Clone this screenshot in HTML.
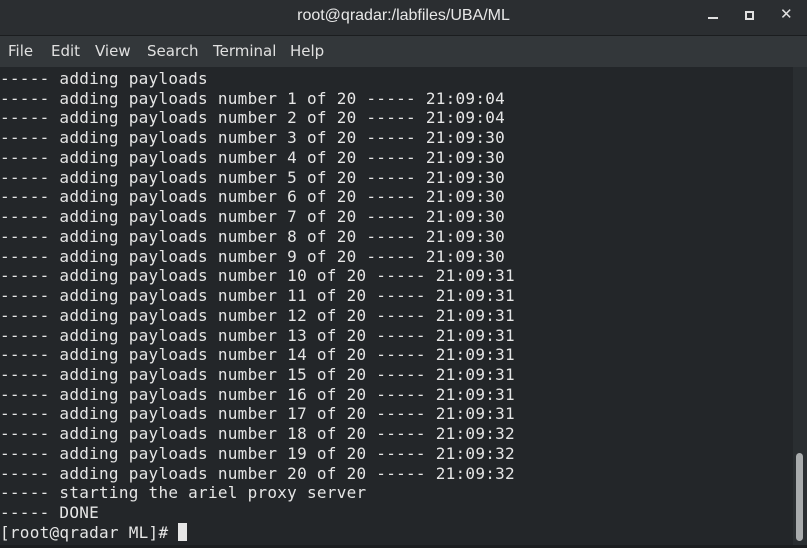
<!DOCTYPE html>
<html><head><meta charset="utf-8"><style>
html,body{margin:0;padding:0;width:807px;height:548px;overflow:hidden;background:#232629;}
.title{position:absolute;left:0;top:0;width:807px;height:35px;background:#2b2e31;border-bottom:1px solid #1b1d1f;}
.title .t{position:absolute;left:0;right:0;top:7px;text-align:center;color:#e8e8e8;font:16px "Liberation Sans","DejaVu Sans",sans-serif;}
.menu{position:absolute;left:0;top:36px;width:807px;height:31px;background:#33373a;}
.menu span{position:absolute;top:6px;color:#e0e0e0;font:15px "DejaVu Sans","Liberation Sans",sans-serif;}
.term{position:absolute;left:0;top:67px;width:793px;height:478px;background:#232629;}
pre{margin:0;position:absolute;left:0;top:2px;font:16px/19.74px "DejaVu Sans Mono","Liberation Mono",monospace;letter-spacing:0.27px;color:#e6e6e6;}
.sb{position:absolute;left:793px;top:67px;width:14px;height:478px;background:#2a2e31;}
.th{position:absolute;left:796px;top:453px;width:7px;height:88px;background:#a9acad;border-radius:4px;}
.bot{position:absolute;left:0;top:545px;width:807px;height:3px;background:#1c1e20;}
.cur{display:inline-block;width:9px;height:18px;background:#e6e6e6;vertical-align:-3px;}
</style></head><body>
<div class="title"><div class="t">root@qradar:/labfiles/UBA/ML</div>
<div style="position:absolute;left:708px;top:17px;width:10px;height:2px;background:#e0e0e0"></div>
<div style="position:absolute;left:745px;top:11px;width:5px;height:5px;border:2px solid #e0e0e0"></div>
<div style="position:absolute;left:780px;top:5px;color:#e0e0e0;font:bold 15px 'DejaVu Sans',sans-serif">✕</div>
</div>
<div class="menu"><span style="left:8px">File</span><span style="left:51px">Edit</span><span style="left:95px">View</span><span style="left:147px">Search</span><span style="left:213px">Terminal</span><span style="left:290px">Help</span></div>
<div class="term"><pre>----- adding payloads
----- adding payloads number 1 of 20 ----- 21:09:04
----- adding payloads number 2 of 20 ----- 21:09:04
----- adding payloads number 3 of 20 ----- 21:09:30
----- adding payloads number 4 of 20 ----- 21:09:30
----- adding payloads number 5 of 20 ----- 21:09:30
----- adding payloads number 6 of 20 ----- 21:09:30
----- adding payloads number 7 of 20 ----- 21:09:30
----- adding payloads number 8 of 20 ----- 21:09:30
----- adding payloads number 9 of 20 ----- 21:09:30
----- adding payloads number 10 of 20 ----- 21:09:31
----- adding payloads number 11 of 20 ----- 21:09:31
----- adding payloads number 12 of 20 ----- 21:09:31
----- adding payloads number 13 of 20 ----- 21:09:31
----- adding payloads number 14 of 20 ----- 21:09:31
----- adding payloads number 15 of 20 ----- 21:09:31
----- adding payloads number 16 of 20 ----- 21:09:31
----- adding payloads number 17 of 20 ----- 21:09:31
----- adding payloads number 18 of 20 ----- 21:09:32
----- adding payloads number 19 of 20 ----- 21:09:32
----- adding payloads number 20 of 20 ----- 21:09:32
----- starting the ariel proxy server
----- DONE
[root@qradar ML]# <span class="cur"></span></pre></div>
<div class="sb"></div><div class="th"></div><div class="bot"></div>
</body></html>
